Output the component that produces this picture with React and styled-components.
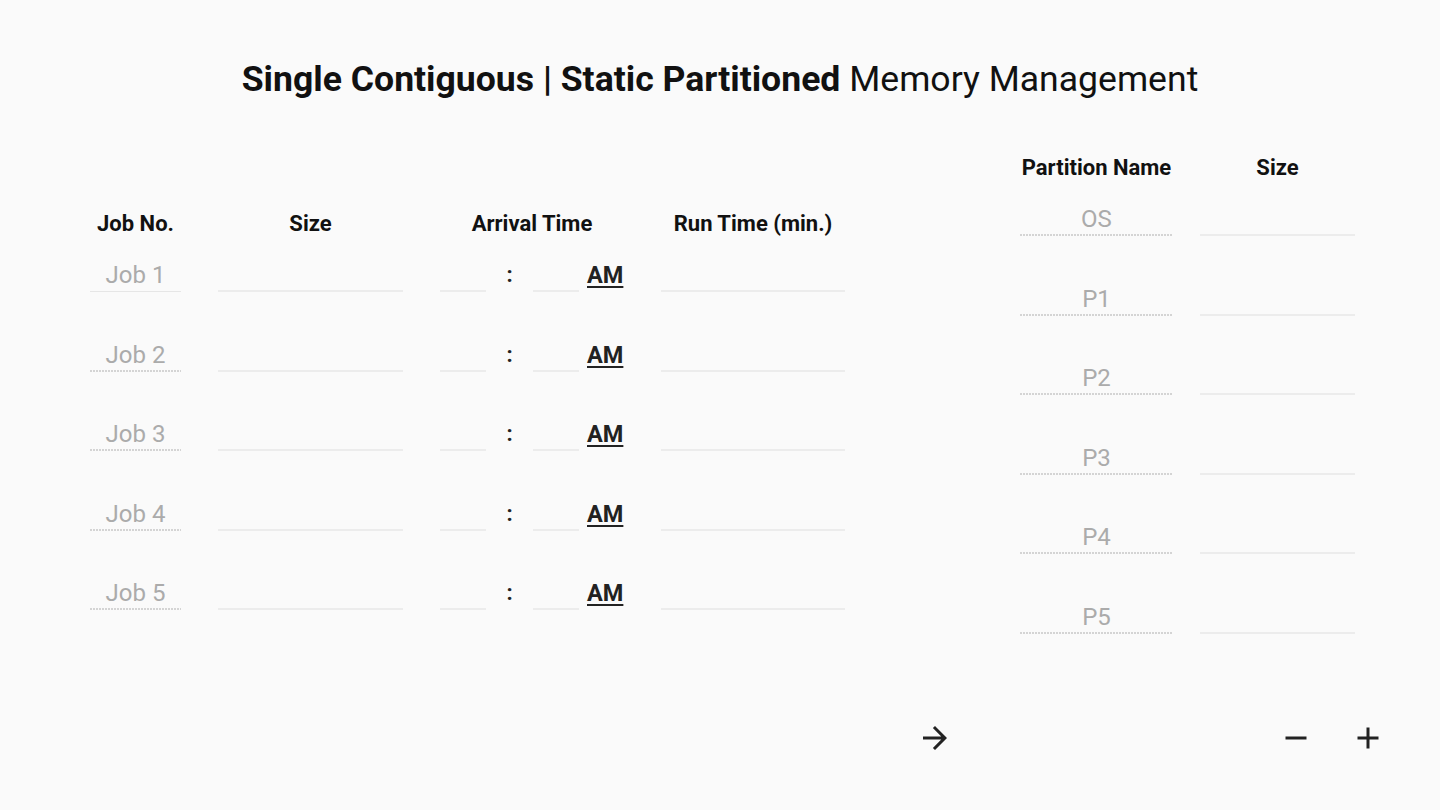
import React from 'react';
import styled, { createGlobalStyle } from 'styled-components';
import { MdArrowForward, MdRemove, MdAdd } from 'react-icons/md';

const jobs = ['Job 1', 'Job 2', 'Job 3', 'Job 4', 'Job 5'];
const partitions = ['OS', 'P1', 'P2', 'P3', 'P4', 'P5'];

const JOB_COLS = '91px 185px 184px 184px';
const PART_COLS = '153px 155px';

const App = () => {
  return (
    <>
      <GlobalStyle />
      <Page>
        <Title>
          <strong>Single Contiguous | Static Partitioned</strong> Memory Management
        </Title>

        <Main>
          {/* Job table */}
          <Table $offset={56}>
            <HeaderRow $cols={JOB_COLS} $gap={37}>
              <Header>Job No.</Header>
              <Header>Size</Header>
              <Header>Arrival Time</Header>
              <Header>Run Time (min.)</Header>
            </HeaderRow>
            <Body $cols={JOB_COLS} $gap={37}>
              {jobs.map((job, i) => (
                <React.Fragment key={job}>
                  <Field value={job} readOnly $dotted={i > 0} $thin={i === 0} />
                  <Field defaultValue="" />
                  <TimeGroup>
                    <Field defaultValue="" />
                    <Colon>:</Colon>
                    <Field defaultValue="" />
                    <Meridiem>AM</Meridiem>
                  </TimeGroup>
                  <Field defaultValue="" />
                </React.Fragment>
              ))}
            </Body>
          </Table>

          <div />

          {/* Partition table */}
          <Table>
            <HeaderRow $cols={PART_COLS} $gap={27}>
              <Header>Partition Name</Header>
              <Header>Size</Header>
            </HeaderRow>
            <Body $cols={PART_COLS} $gap={27}>
              {partitions.map((p) => (
                <React.Fragment key={p}>
                  <Field value={p} readOnly $dotted />
                  <Field defaultValue="" />
                </React.Fragment>
              ))}
            </Body>
          </Table>

          <Toolbar />
          <Toolbar $align="center" $shift={5}>
            <IconButton><MdArrowForward /></IconButton>
          </Toolbar>
          <Toolbar $align="flex-end">
            <IconButton><MdRemove /></IconButton>
            <IconButton><MdAdd /></IconButton>
          </Toolbar>
        </Main>
      </Page>
    </>
  );
};

const GlobalStyle = createGlobalStyle`
  html, body {
    margin: 0;
    padding: 0;
    background: #fafafa;
  }
  body {
    font-family: Roboto, "Liberation Sans", sans-serif;
    color: #111;
  }
`;

const Page = styled.div`
  width: 1440px;
  height: 810px;
  box-sizing: border-box;
  padding: 59px 0 0 90px;
  background: #fafafa;
  overflow: hidden;
`;

const Title = styled.h1`
  margin: 0 0 48px -90px;
  font-size: 35.6px;
  line-height: 40px;
  font-weight: 400;
  text-align: center;
  color: #111;
  strong {
    font-weight: 700;
  }
`;

const Main = styled.div`
  display: grid;
  grid-template-columns: 755px 175px 366px;
  row-gap: 86px;
  align-items: start;
`;

const Table = styled.div`
  display: flex;
  flex-direction: column;
  margin-top: ${({ $offset }) => $offset || 0}px;
`;

const HeaderRow = styled.div`
  display: grid;
  grid-template-columns: ${({ $cols }) => $cols};
  column-gap: ${({ $gap }) => $gap}px;
  height: 40px;
  margin-bottom: 15px;
`;

const Body = styled.div`
  display: grid;
  grid-template-columns: ${({ $cols }) => $cols};
  grid-auto-rows: 34px;
  column-gap: ${({ $gap }) => $gap}px;
  row-gap: 45.5px;
`;

const Header = styled.div`
  line-height: 42px;
  font-size: 22px;
  font-weight: 700;
  text-align: center;
  color: #111;
  white-space: nowrap;
`;

const Field = styled.input`
  display: block;
  width: 100%;
  height: 34px;
  box-sizing: border-box;
  margin: 0;
  padding: 0;
  border: none;
  outline: none;
  font-family: Roboto, "Liberation Sans", sans-serif;
  font-size: 24px;
  text-align: center;
  color: #ababab;
  background-color: transparent;
  border-bottom: ${({ $dotted, $thin }) =>
    $dotted ? 'none' : $thin ? '1px solid #e6e6e6' : '2px solid #ececec'};
  background-image: ${({ $dotted }) =>
    $dotted ? 'linear-gradient(to right, #d4d4d4 2px, transparent 2px)' : 'none'};
  background-size: 3px 2px;
  background-repeat: repeat-x;
  background-position: left bottom;
`;

const TimeGroup = styled.div`
  display: flex;
  align-items: stretch;
  ${Field} {
    width: 46px;
    flex: none;
  }
`;

const Colon = styled.span`
  width: 47px;
  flex: none;
  text-align: center;
  font-size: 22px;
  font-weight: 700;
  line-height: 34px;
  color: #222;
`;

const Meridiem = styled.span`
  margin-left: 8px;
  font-size: 23.5px;
  font-weight: 700;
  line-height: 34px;
  color: #222;
  text-decoration: underline;
  text-underline-offset: 3px;
  cursor: pointer;
`;

const Toolbar = styled.div`
  display: flex;
  align-items: center;
  justify-content: ${({ $align }) => $align || 'flex-start'};
  gap: 36px;
  height: 36px;
  padding-left: ${({ $shift }) => $shift || 0}px;
`;

const IconButton = styled.button`
  display: flex;
  align-items: center;
  justify-content: center;
  width: 36px;
  height: 36px;
  padding: 0;
  border: none;
  background: none;
  color: #222;
  font-size: 36px;
  cursor: pointer;
`;

export default App;
